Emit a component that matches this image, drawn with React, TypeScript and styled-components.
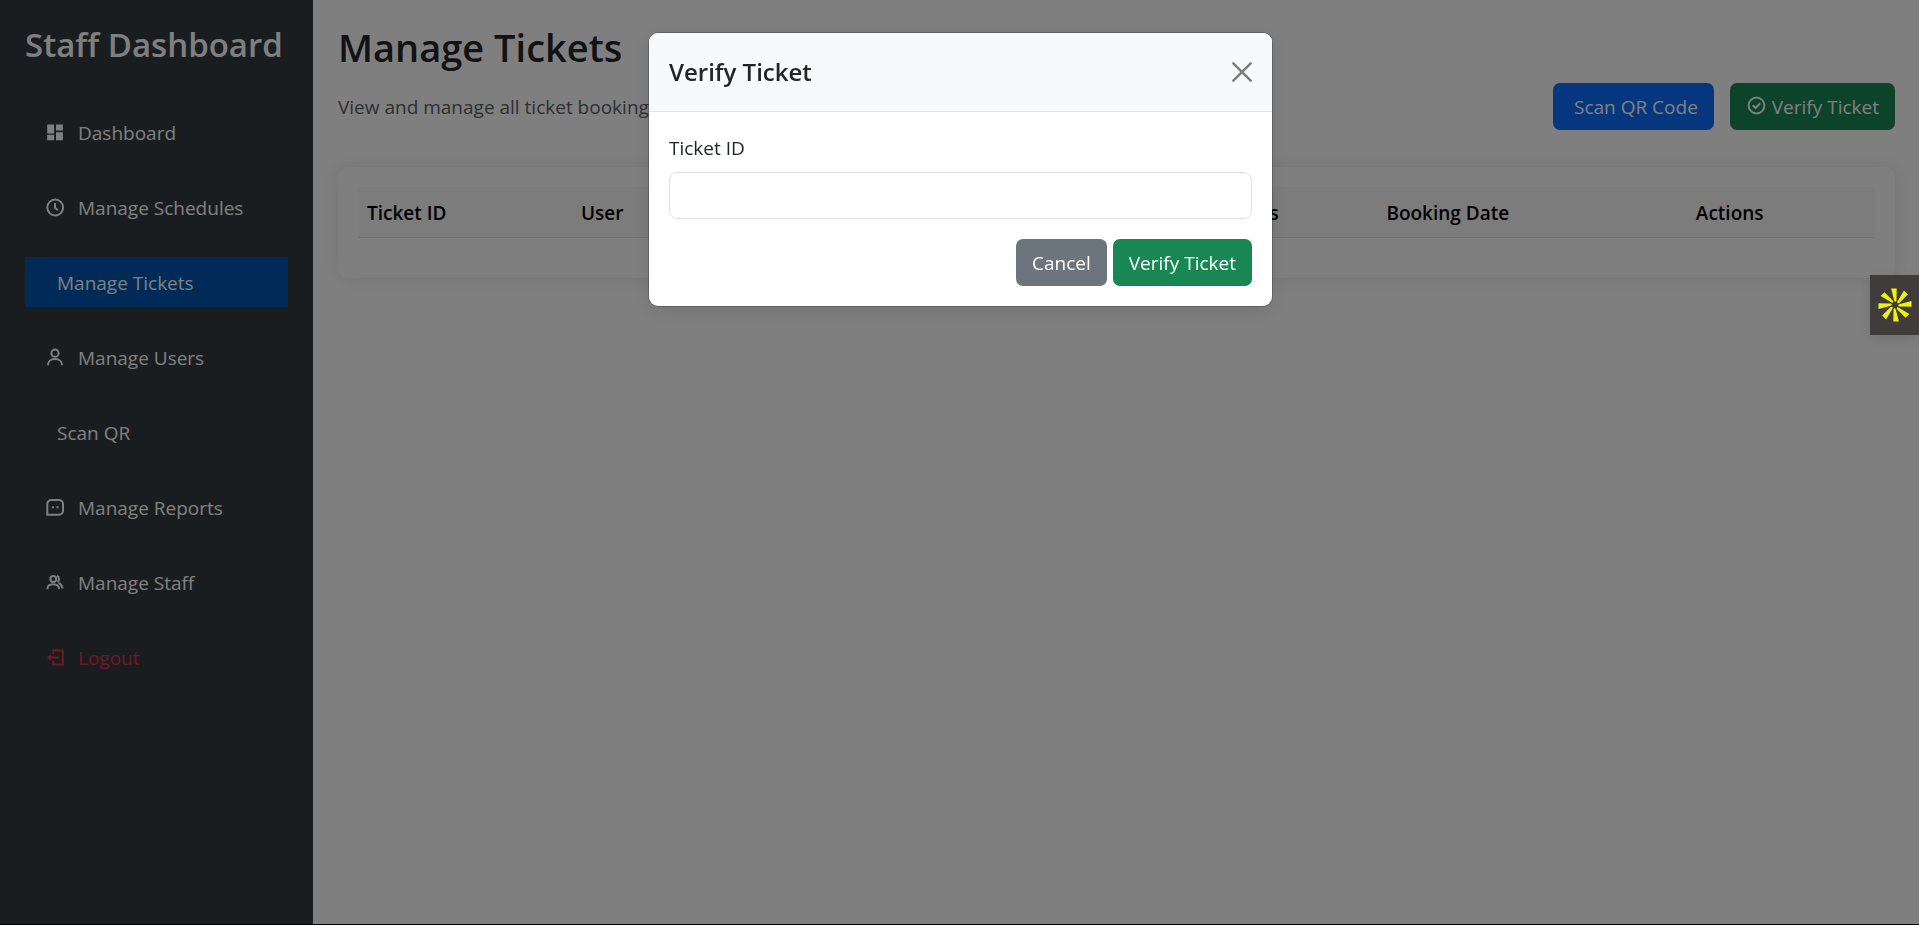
import React from "react";
import styled, { createGlobalStyle } from "styled-components";

const GlobalStyle = createGlobalStyle`
  *, *::before, *::after { box-sizing: border-box; }
  body {
    margin: 0;
    background: #fff;
    color: #212529;
    font-family: "Segoe UI", "Open Sans", "Noto Sans", sans-serif;
    font-size: 19px;
    line-height: 30px;
  }
  h1, h2, p { margin: 0; }
  button, input { font: inherit; }
`;

const Page = styled.div`
  display: flex;
  min-height: 100vh;
  border-bottom: 1px solid #000;
`;

const Sidebar = styled.aside`
  flex: none;
  width: 313px;
  padding: 25px;
  background: #343a40;
  color: #fff;
`;

const Brand = styled.h2`
  font-size: 33px;
  font-weight: 600;
  line-height: 40px;
  white-space: nowrap;
`;

const Nav = styled.nav`
  display: flex;
  flex-direction: column;
  gap: 25px;
  margin-top: 42px;
`;

const NavLink = styled.a<{ $active?: boolean; $danger?: boolean }>`
  display: flex;
  align-items: center;
  height: 50px;
  padding: 2px 20px 0;
  color: ${(p) => (p.$danger ? "#dc3545" : "#fff")};
  background: ${(p) => (p.$active ? "#0056b3" : "transparent")};
  text-decoration: none;
`;

const NavText = styled.span`
  margin-left: 12px;
`;

const Glyph = styled.svg`
  flex: none;
  width: 21px;
  height: 21px;
  margin-bottom: 2px;
  fill: none;
  stroke: currentColor;
  stroke-width: 2;
`;

const Main = styled.main`
  flex: 1;
  min-width: 0;
  padding: 25px 24px 25px 25px;
`;

const PageTitle = styled.h1`
  margin-bottom: 14px;
  font-size: 38px;
  font-weight: 600;
  line-height: 44px;
`;

const Toolbar = styled.div`
  display: flex;
  align-items: center;
  justify-content: space-between;
  margin-bottom: 37px;
`;

const Lead = styled.p`
  color: #5c6065;
`;

const Actions = styled.div`
  display: flex;
  gap: 16px;
`;

const tones = { primary: "#0d6efd", success: "#198754", secondary: "#6c757d" };

const Button = styled.button<{ $tone: keyof typeof tones; $indent?: boolean }>`
  display: inline-flex;
  align-items: center;
  gap: 5px;
  height: 47px;
  padding: 0 16px 0 ${(p) => (p.$indent ? 21 : 16)}px;
  border: 0;
  border-radius: 7px;
  background: ${(p) => tones[p.$tone]};
  color: #fff;
  white-space: nowrap;
`;

const Card = styled.section`
  padding: 20px 20px 40px;
  border-radius: 10px;
  background: #fff;
  box-shadow: 0 0 18px rgba(0, 0, 0, 0.1);
`;

const Table = styled.table`
  width: 100%;
  table-layout: fixed;
  border-collapse: collapse;
`;

const HeadCell = styled.th<{ $share: number }>`
  width: ${(p) => p.$share}%;
  padding: 11px 9px 9px;
  border-bottom: 1px solid #dee2e6;
  background: #f8f9fa;
  color: #000;
  font-weight: 600;
  text-align: left;
`;

const Backdrop = styled.div`
  position: fixed;
  inset: 0;
  display: flex;
  justify-content: center;
  align-items: flex-start;
  padding: 33px 16px 33px 18px;
  background: rgba(0, 0, 0, 0.5);
`;

const Dialog = styled.div`
  width: 100%;
  max-width: 623px;
  overflow: hidden;
  border-radius: 9px;
  background: #fff;
  box-shadow: 0 0 0 1px rgba(0, 0, 0, 0.2), 0 4px 20px rgba(0, 0, 0, 0.1);
`;

const DialogHeader = styled.header`
  display: flex;
  align-items: center;
  justify-content: space-between;
  height: 79px;
  padding: 0 20px;
  border-bottom: 1px solid #dee2e6;
  background: #f8f9fa;
`;

const DialogTitle = styled.h2`
  font-size: 24px;
  font-weight: 600;
  line-height: 38px;
`;

const CloseButton = styled.button`
  display: flex;
  padding: 0;
  border: 0;
  background: none;
  color: #000;
  opacity: 0.5;
`;

const Form = styled.form`
  padding: 21px 20px 20px;
`;

const Label = styled.label`
  display: block;
  margin-bottom: 9px;
`;

const TextInput = styled.input`
  display: block;
  width: 100%;
  height: 47px;
  margin-bottom: 20px;
  padding: 0 15px;
  border: 1px solid #dee2e6;
  border-radius: 8px;
  background: #fff;
`;

const FormActions = styled.div`
  display: flex;
  justify-content: flex-end;
  gap: 6px;
`;

const Widget = styled.button`
  position: fixed;
  top: 275px;
  right: 0;
  display: flex;
  align-items: center;
  justify-content: center;
  width: 49px;
  height: 60px;
  padding: 0;
  border: 0;
  background: #403c39;
  box-shadow: 0 4px 12px rgba(0, 0, 0, 0.12);
`;

const Icon = ({ children }: { children: React.ReactNode }) => (
  <Glyph viewBox="-1 -1 21 21" aria-hidden="true">{children}</Glyph>
);

const DashboardIcon = () => (
  <Icon>
    <path
      d="M1.200 1.500h6.900v9H1.200zM10 1.500h6.900v6H10zM1.200 11.700h6.900v5.500H1.200zM10 9.200h6.900v8H10z"
      fill="currentColor"
      stroke="none"
    />
  </Icon>
);

const ClockIcon = () => (
  <Icon>
    <circle cx="9.200" cy="9.500" r="7.900" />
    <path d="M9 5v4.700l2.900 2.500" />
  </Icon>
);

const UserIcon = () => (
  <Icon>
    <circle cx="9" cy="5.200" r="3.600" />
    <path d="M1.900 17.300c0-4 3-6.200 7.100-6.200s7.100 2.200 7.100 6.200" />
  </Icon>
);

const MessageIcon = () => (
  <Icon>
    <path d="M1.300 16.700V6a4 4 0 0 1 4-4H13a4 4 0 0 1 4 4v6.700a4 4 0 0 1-4 4z" />
    <path d="M5.800 9.300h2.200M10.400 9.300h2.200" />
  </Icon>
);

const StaffIcon = () => (
  <Icon>
    <circle cx="7.300" cy="6" r="2.900" />
    <path d="M1.400 16.300c0-3.300 2.300-5 5.800-5s5.800 1.700 5.800 5M10.800 2.900c2.900.9 2.700 4.700.8 6M12.500 9.800c2.400 1 3.700 3 4 5.500" />
  </Icon>
);

const LogoutIcon = () => (
  <Icon>
    <path d="M7.200 6V2.500h9.600v14H7.200V13M4 9.500h8.700" />
    <path d="M1 9.500l4.200-3.600v7.200z" fill="currentColor" stroke="none" />
  </Icon>
);

const CheckIcon = () => (
  <Icon>
    <circle cx="9.500" cy="9.500" r="7.900" />
    <path d="M5.800 9.300l2.700 2.700 4.800-4.800" />
  </Icon>
);

const CloseIcon = () => (
  <svg width="20" height="20" viewBox="0 0 20 20" stroke="currentColor" strokeWidth="2.4" strokeLinecap="round" aria-hidden="true">
    <path d="M1.300 1.300l17.400 17.400M18.700 1.300L1.300 18.700" />
  </svg>
);

const BurstIcon = () => (
  <svg width="34" height="34" viewBox="-17 -17 34 34" fill="#f0f20a" aria-hidden="true">
    {[0, 45, 90, 135, 180, 225, 270, 315].map((angle) => (
      <path
        key={angle}
        transform={`rotate(${angle})`}
        d="M-3.900-16.500H1.700L1.500-4.500Q1.300-3 .2-3.200Q-.7-3.400-.9-5z"
      />
    ))}
  </svg>
);

const navItems = [
  { label: "Dashboard", icon: <DashboardIcon /> },
  { label: "Manage Schedules", icon: <ClockIcon /> },
  { label: "Manage Tickets", active: true },
  { label: "Manage Users", icon: <UserIcon /> },
  { label: "Scan QR" },
  { label: "Manage Reports", icon: <MessageIcon /> },
  { label: "Manage Staff", icon: <StaffIcon /> },
  { label: "Logout", icon: <LogoutIcon />, danger: true },
];

const columns = [
  { label: "Ticket ID", share: 14.1 },
  { label: "User", share: 11 },
  { label: "Schedule", share: 17 },
  { label: "Seat", share: 14.2 },
  { label: "Status", share: 10.9 },
  { label: "Booking Date", share: 20.4 },
  { label: "Actions", share: 12.4 },
];

export default function App() {
  return (
    <>
      <GlobalStyle />
      <Page>
        <Sidebar>
          <Brand>Staff Dashboard</Brand>
          <Nav>
            {navItems.map((item) => (
              <NavLink key={item.label} href="#" $active={item.active} $danger={item.danger}>
                {item.icon}
                <NavText>{item.label}</NavText>
              </NavLink>
            ))}
          </Nav>
        </Sidebar>
        <Main>
          <PageTitle>Manage Tickets</PageTitle>
          <Toolbar>
            <Lead>View and manage all ticket bookings</Lead>
            <Actions>
              <Button type="button" $tone="primary" $indent>Scan QR Code</Button>
              <Button type="button" $tone="success"><CheckIcon />Verify Ticket</Button>
            </Actions>
          </Toolbar>
          <Card>
            <Table>
              <thead>
                <tr>
                  {columns.map((c) => (
                    <HeadCell key={c.label} scope="col" $share={c.share}>{c.label}</HeadCell>
                  ))}
                </tr>
              </thead>
            </Table>
          </Card>
        </Main>
      </Page>
      <Backdrop>
        <Dialog role="dialog" aria-modal="true" aria-labelledby="verify-title">
          <DialogHeader>
            <DialogTitle id="verify-title">Verify Ticket</DialogTitle>
            <CloseButton type="button" aria-label="Close"><CloseIcon /></CloseButton>
          </DialogHeader>
          <Form>
            <Label htmlFor="ticket-id">Ticket ID</Label>
            <TextInput id="ticket-id" type="text" />
            <FormActions>
              <Button type="button" $tone="secondary">Cancel</Button>
              <Button type="submit" $tone="success">Verify Ticket</Button>
            </FormActions>
          </Form>
        </Dialog>
      </Backdrop>
      <Widget type="button" aria-label="Open widget"><BurstIcon /></Widget>
    </>
  );
}
